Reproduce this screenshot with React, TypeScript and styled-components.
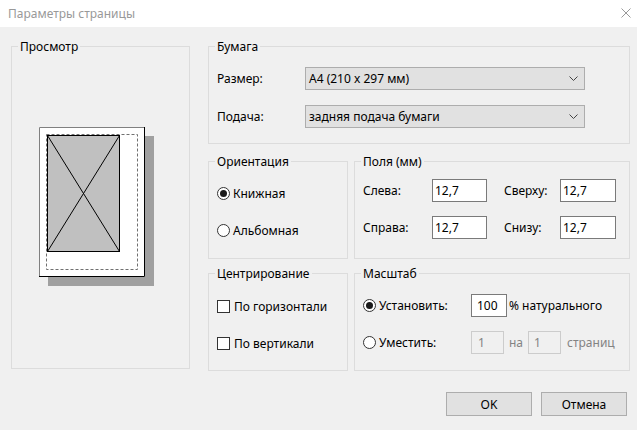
import React from 'react';
import styled, { createGlobalStyle } from 'styled-components';

const GlobalStyle = createGlobalStyle`
  * {
    box-sizing: border-box;
  }

  body {
    margin: 0;
    padding: 0;
    background: #f0f0f0;
    font-family: "Segoe UI", "Noto Sans", sans-serif;
    font-size: 12px;
    color: #000;
  }
`;

const Window = styled.div`
  width: 637px;
  height: 430px;
  display: flex;
  flex-direction: column;
  background: #f0f0f0;
`;

const TitleBar = styled.div`
  height: 27px;
  flex-shrink: 0;
  background: #fff;
  display: flex;
  align-items: center;
  justify-content: space-between;
  padding: 0 6px 1px 8px;
`;

const Title = styled.span`
  color: #999;
  font-size: 12px;
`;

const Body = styled.div`
  display: flex;
  gap: 18px;
  padding: 12px 0 0 11px;
`;

const RightColumn = styled.div`
  width: 422px;
  display: flex;
  flex-direction: column;
`;

const Row = styled.div<{ $top: number }>`
  display: flex;
  gap: 6px;
  margin-top: ${(p) => p.$top}px;
`;

const Group = styled.fieldset<{ $w: number; $h: number }>`
  margin: 0;
  padding: 0;
  width: ${(p) => p.$w}px;
  height: ${(p) => p.$h}px;
  border: 1px solid #dcdcdc;
  min-width: 0;
`;

const Legend = styled.legend`
  margin-left: 6px;
  padding: 0 2px;
  line-height: 15px;
  font-size: 12px;
`;

const PreviewBox = styled.div`
  padding: 73px 0 0 27px;
`;

const PaperGrid = styled.div`
  display: grid;
  grid-template-columns: 88px 280px;
  row-gap: 15px;
  align-items: center;
  padding: 13px 0 0 8px;
`;

const Label = styled.span``;

const Combo = styled.div`
  height: 23px;
  background: #e1e1e1;
  border: 1px solid #adadad;
  display: flex;
  align-items: center;
  justify-content: space-between;
  padding: 0 6px 0 3px;
`;

const Stack = styled.div<{ $top: number }>`
  display: flex;
  flex-direction: column;
  gap: 21px;
  padding: ${(p) => p.$top}px 0 0 8px;
`;

const Option = styled.label<{ $gap: number }>`
  display: flex;
  align-items: center;
  gap: ${(p) => p.$gap}px;
  height: 16px;
`;

const RadioCircle = styled.span<{ $on?: boolean }>`
  width: 13px;
  height: 13px;
  border-radius: 50%;
  border: 1px solid #333;
  background: #fff;
  display: flex;
  align-items: center;
  justify-content: center;
  flex-shrink: 0;

  &::after {
    content: '';
    width: 7px;
    height: 7px;
    border-radius: 50%;
    background: ${(p) => (p.$on ? '#1a1a1a' : 'transparent')};
  }
`;

const CheckSquare = styled.span`
  width: 13px;
  height: 13px;
  border: 1px solid #333;
  background: #fff;
  flex-shrink: 0;
`;

const MarginGrid = styled.div`
  display: grid;
  grid-template-columns: 69px 55px 73px 56px;
  row-gap: 14px;
  align-items: center;
  padding: 10px 0 0 8px;
`;

const SideLabel = styled.span<{ $pad?: number }>`
  padding-left: ${(p) => p.$pad || 0}px;
`;

const TextBox = styled.div<{ $w?: number; $disabled?: boolean; $pad?: number }>`
  width: ${(p) => (p.$w ? `${p.$w}px` : 'auto')};
  height: 23px;
  border: 1px solid ${(p) => (p.$disabled ? '#cccccc' : '#7a7a7a')};
  background: ${(p) => (p.$disabled ? '#f0f0f0' : '#fff')};
  color: ${(p) => (p.$disabled ? '#838383' : '#000')};
  display: flex;
  align-items: center;
  padding-left: ${(p) => p.$pad ?? 2}px;
  flex-shrink: 0;
`;

const ScaleRows = styled.div`
  display: flex;
  flex-direction: column;
  gap: 14px;
  padding: 13px 0 0 8px;
`;

const ScaleRow = styled.div`
  display: flex;
  align-items: center;
  height: 23px;
`;

const ScaleOption = styled.div`
  width: 108px;
  display: flex;
  align-items: center;
  gap: 3px;
`;

const Muted = styled.span<{ $ml: number; $mr?: number }>`
  color: #838383;
  margin-left: ${(p) => p.$ml}px;
  margin-right: ${(p) => p.$mr || 0}px;
`;

const Plain = styled.span<{ $ml: number }>`
  margin-left: ${(p) => p.$ml}px;
`;

const Footer = styled.div`
  display: flex;
  justify-content: flex-end;
  gap: 9px;
  padding: 21px 10px 0 0;
`;

const Button = styled.button`
  width: 86px;
  height: 24px;
  background: #e1e1e1;
  border: 1px solid #adadad;
  font-family: inherit;
  font-size: 12px;
  color: #000;
  padding: 0;
`;

const Chevron = () => (
  <svg width="9" height="5" viewBox="0 0 9 5">
    <polyline points="0.5,0.5 4.5,4.5 8.5,0.5" fill="none" stroke="#444" strokeWidth="1" />
  </svg>
);

const CloseIcon = () => (
  <svg width="10" height="10" viewBox="0 0 10 10">
    <path d="M0.5 0.5 L9.5 9.5 M9.5 0.5 L0.5 9.5" stroke="#999" strokeWidth="1" />
  </svg>
);

const PagePreview = () => (
  <svg width="116" height="160" viewBox="0 0 116 160">
    <rect x="9" y="9" width="106" height="150" fill="#a0a0a0" />
    <rect x="0" y="0" width="106" height="150" fill="#fff" />
    <path d="M0.5 150 V0.5 H106" stroke="#808080" fill="none" />
    <path d="M0 149.5 H105.5 V0" stroke="#000" fill="none" />
    <rect x="7.5" y="7.5" width="91" height="135" fill="none" stroke="#707070" strokeDasharray="3 2" />
    <rect x="8.5" y="8.5" width="72" height="116" fill="#c0c0c0" stroke="#000" />
    <path d="M8.5 8.5 L80.5 124.5 M80.5 8.5 L8.5 124.5" stroke="#000" fill="none" />
  </svg>
);

export default function App() {
  return (
    <>
      <GlobalStyle />
      <Window>
        <TitleBar>
          <Title>Параметры страницы</Title>
          <CloseIcon />
        </TitleBar>

        <Body>
          <Group $w={179} $h={330}>
            <Legend>Просмотр</Legend>
            <PreviewBox>
              <PagePreview />
            </PreviewBox>
          </Group>

          <RightColumn>
            <Group $w={422} $h={105}>
              <Legend>Бумага</Legend>
              <PaperGrid>
                <Label>Размер:</Label>
                <Combo>
                  <span>A4 (210 x 297 мм)</span>
                  <Chevron />
                </Combo>
                <Label>Подача:</Label>
                <Combo>
                  <span>задняя подача бумаги</span>
                  <Chevron />
                </Combo>
              </PaperGrid>
            </Group>

            <Row $top={10}>
              <Group $w={140} $h={105}>
                <Legend>Ориентация</Legend>
                <Stack $top={16}>
                  <Option $gap={3}>
                    <RadioCircle $on />
                    Книжная
                  </Option>
                  <Option $gap={3}>
                    <RadioCircle />
                    Альбомная
                  </Option>
                </Stack>
              </Group>
              <Group $w={276} $h={105}>
                <Legend>Поля (мм)</Legend>
                <MarginGrid>
                  <SideLabel>Слева:</SideLabel>
                  <TextBox>12,7</TextBox>
                  <SideLabel $pad={17}>Сверху:</SideLabel>
                  <TextBox>12,7</TextBox>
                  <SideLabel>Справа:</SideLabel>
                  <TextBox>12,7</TextBox>
                  <SideLabel $pad={17}>Снизу:</SideLabel>
                  <TextBox>12,7</TextBox>
                </MarginGrid>
              </Group>
            </Row>

            <Row $top={7}>
              <Group $w={140} $h={105}>
                <Legend>Центрирование</Legend>
                <Stack $top={17}>
                  <Option $gap={4}>
                    <CheckSquare />
                    По горизонтали
                  </Option>
                  <Option $gap={4}>
                    <CheckSquare />
                    По вертикали
                  </Option>
                </Stack>
              </Group>
              <Group $w={276} $h={105}>
                <Legend>Масштаб</Legend>
                <ScaleRows>
                  <ScaleRow>
                    <ScaleOption>
                      <RadioCircle $on />
                      Установить:
                    </ScaleOption>
                    <TextBox $w={36} $pad={5}>100</TextBox>
                    <Plain $ml={2}>% натурального</Plain>
                  </ScaleRow>
                  <ScaleRow>
                    <ScaleOption>
                      <RadioCircle />
                      Уместить:
                    </ScaleOption>
                    <TextBox $w={33} $pad={6} $disabled>1</TextBox>
                    <Muted $ml={5} $mr={5}>на</Muted>
                    <TextBox $w={33} $pad={5} $disabled>1</TextBox>
                    <Muted $ml={6}>страниц</Muted>
                  </ScaleRow>
                </ScaleRows>
              </Group>
            </Row>
          </RightColumn>
        </Body>

        <Footer>
          <Button>OK</Button>
          <Button>Отмена</Button>
        </Footer>
      </Window>
    </>
  );
}
